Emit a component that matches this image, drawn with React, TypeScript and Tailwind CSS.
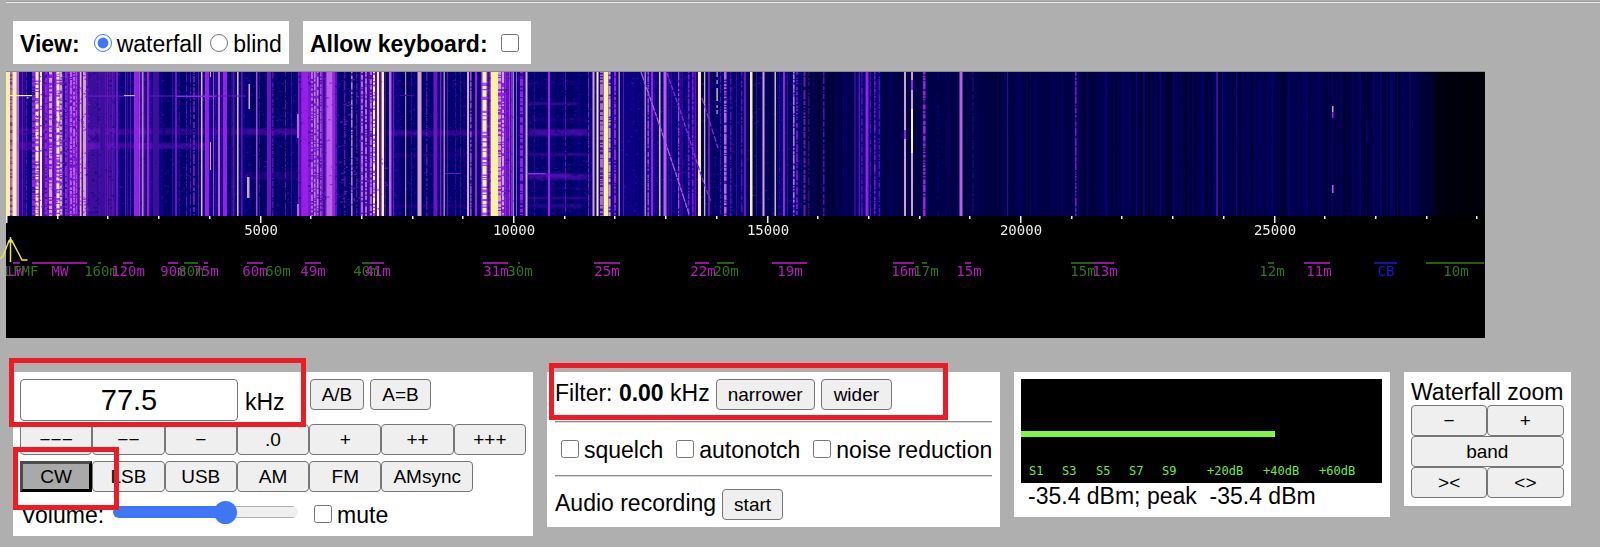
import { useState, type ReactNode } from "react";

const LEVELS = [
  "#00001c", "#000048", "#02006c", "#0c0084", "#3c0e9c",
  "#6a16c0", "#9620e8", "#b860e6", "#d0a4c6", "#f8f49c",
];

// Background power of the spectrum: start, end, level, density of faint streaks
const BACKGROUND: [number, number, number, number][] = [
  [6, 19, 7, 0], [19, 32, 3, 0.7], [32, 88, 5, 0.9], [88, 115, 4, 0.2],
  [115, 135, 3, 0.5], [135, 150, 4, 0.4], [150, 163, 3, 0.4], [163, 200, 2, 0.4],
  [200, 245, 3, 0.6], [245, 298, 2, 0.4], [298, 337, 5, 0.6], [337, 360, 2, 0.5],
  [360, 386, 4, 0.8], [386, 400, 3, 0.5], [400, 481, 2, 0.4], [481, 512, 6, 0.5],
  [512, 528, 3, 0.6], [528, 588, 2, 0.3], [588, 622, 3, 0.6], [622, 668, 3, 0.1],
  [668, 700, 3, 0.5], [700, 760, 2, 0.6], [760, 802, 2, 0.5], [802, 855, 1, 0.4],
  [855, 881, 2, 0.5], [881, 1100, 1, 0.25], [1100, 1415, 1, 0.6], [1415, 1435, 1, 0.2],
  [1435, 1485, 0, 0.1],
];

// Carriers: x, width, level, 1 when the trace is broken up
const CARRIERS: [number, number, number, number][] = [
  [6, 4, 9, 0], [10, 3, 7, 1], [12.5, 4, 9, 0], [22, 1, 5, 0], [26, 1, 5, 1],
  [32, 3, 6, 1], [35.5, 3, 9, 1], [40, 2, 9, 0], [43, 1, 4, 0], [45, 2, 6, 1], [49, 3, 8, 1],
  [53, 1, 4, 0], [56.5, 3, 9, 1], [60, 2, 8, 1], [63, 2, 3, 0], [65, 2, 6, 1], [68, 1, 4, 0],
  [70, 2, 7, 1], [73, 2, 7, 1], [76, 1, 7, 1], [78, 1, 4, 0], [80, 1.5, 9, 0], [83, 3, 8, 0],
  [100, 5, 4, 0], [107, 1, 5, 0], [116, 2, 5, 0], [125, 1, 5, 0], [127, 1, 4, 0], [130, 1, 5, 0],
  [134, 4, 6, 0], [138.5, 1.5, 7, 0], [142, 1.5, 8, 0], [147, 2, 6, 0], [153, 6, 4, 0],
  [172, 1, 4, 0], [175, 2, 5, 0], [179, 1, 4, 1], [186, 1, 5, 1], [190, 1, 5, 1], [193, 2, 5, 1],
  [198, 1, 5, 0], [201, 1.5, 9, 0], [205, 4, 6, 0], [213, 1, 7, 0], [218, 2, 7, 0], [223, 4, 6, 0],
  [229, 2, 1, 0], [233, 1.5, 5, 0], [237, 1.5, 9, 0], [241, 1.5, 5, 0], [256, 1.5, 7, 0],
  [259, 1, 4, 1], [267, 4, 5, 0], [272, 1.5, 5, 1], [285, 1, 5, 1], [291, 1, 4, 0],
  [302, 6, 6, 0], [311, 2, 7, 1], [314, 1.5, 8, 1], [317, 1.5, 8, 1], [320, 1.5, 7, 1],
  [323, 2, 4, 0], [326.5, 6, 7, 0], [333, 2, 6, 0], [344, 1.5, 5, 1], [351, 1.5, 8, 1],
  [356, 1.5, 5, 1], [361, 2, 7, 1], [365, 2, 7, 1], [368, 1, 4, 0], [370, 2, 7, 1],
  [373, 2, 9, 1], [377, 2, 9, 0], [379.5, 1, 5, 0], [381.5, 2.5, 9, 0], [386, 2, 1, 0],
  [389, 2.5, 7, 0], [393, 1, 5, 0], [405, 1.2, 8, 0], [411, 1, 4, 1], [417.5, 4, 8, 0],
  [426, 1.5, 5, 1], [433.5, 4, 5, 0], [440, 1.5, 6, 0], [443.5, 1.5, 8, 0], [447, 1, 5, 0],
  [455, 1, 4, 1], [460, 1, 4, 1], [467, 2, 8, 0], [470, 1.5, 7, 1], [475, 2, 6, 0],
  [479, 2, 3, 0], [482.5, 4, 9, 1], [487.5, 2, 4, 1], [491, 7, 9, 0], [498, 3, 8, 1],
  [502, 2, 8, 1], [506, 3, 5, 1], [510, 1, 3, 0], [512.5, 1.5, 8, 0], [516, 1, 7, 0],
  [520, 3, 6, 1], [525.5, 2, 8, 0], [534, 1, 4, 1], [548, 2, 6, 0], [565, 1, 5, 1],
  [588, 1, 6, 1], [592.5, 2, 8, 0], [596.5, 2, 9, 0], [600, 3, 7, 1], [603.5, 5, 9, 0],
  [608.5, 2, 8, 1], [614, 2, 6, 1], [618.5, 1.5, 8, 0], [623, 1, 5, 0], [640, 1, 2, 0],
  [644.5, 1.5, 8, 0], [647.5, 1.5, 7, 1], [651, 2, 6, 0], [655, 1, 2, 0], [659, 1.5, 9, 0],
  [663.5, 3, 7, 0], [671, 1, 4, 0], [678, 1.2, 7, 1], [688, 1.5, 6, 1], [692, 1.5, 6, 1],
  [695, 1, 5, 0], [698, 3, 9, 0], [704, 1.3, 9, 0], [708, 2, 5, 0], [720, 1, 5, 1],
  [724, 2.5, 7, 1], [730, 1.5, 5, 1], [736, 1, 4, 0], [741, 1.5, 5, 1], [744, 2, 5, 0],
  [750, 2.5, 9, 0], [756, 1, 4, 0], [762.5, 2, 8, 0], [769, 3, 1, 0], [774.5, 1.5, 9, 0],
  [779, 1, 4, 1], [783, 2, 6, 0], [787, 1, 4, 0], [793, 1.5, 8, 1], [796, 2, 5, 1],
  [803.5, 2, 5, 1], [808, 1.5, 4, 1], [813, 1, 2, 0], [823, 1.5, 5, 1], [834, 1, 2, 1],
  [854.5, 1, 5, 0], [858.5, 1.5, 5, 0], [861.5, 1, 6, 1], [865.5, 3, 6, 0], [870, 1, 5, 1],
  [874, 1.5, 6, 1], [878.5, 1.5, 5, 1], [904, 2, 8, 0], [911, 2, 8, 0], [923, 2.5, 6, 1],
  [937, 2, 2, 1], [959.5, 3, 7, 0], [972.5, 1, 4, 1], [1007, 1.2, 4, 0], [1030, 1, 2, 0],
  [1075, 1.5, 6, 1], [1078, 1, 2, 0], [1087, 1, 3, 0], [1106, 1.5, 3, 0], [1124, 1, 2, 0],
  [1136, 1, 3, 0], [1143, 1.5, 3, 0], [1160, 1.5, 3, 0], [1173, 1.5, 3, 0], [1192, 1, 2, 0],
  [1202, 2, 2, 0], [1216, 2, 4, 0], [1222, 1, 3, 0], [1236, 1.5, 3, 0], [1254, 1, 2, 0],
  [1271, 2, 2, 0], [1288, 2, 2, 0], [1306, 2, 2, 0], [1340, 1, 2, 0], [1358, 2, 2, 0],
  [1380, 2, 2, 0], [1390, 3, 2, 0], [1409.5, 1.5, 3, 0],
];

// Short transmissions: x, y, width, height, level
const BURSTS: [number, number, number, number, number][] = [
  [6, 95, 26, 1.2, 9], [27, 97, 1.5, 1.5, 8], [88, 95.5, 36, 1.2, 5], [124, 95, 11, 1.2, 8],
  [150, 95.5, 26, 1, 5], [176, 95.5, 40, 1.5, 6], [216, 95.5, 30, 1, 5], [210, 72, 1, 5, 8],
  [210, 142, 1, 28, 8], [248.5, 84, 1.5, 25, 8], [247, 177, 2.5, 21, 8], [297, 114, 2, 24, 7],
  [297, 204, 2, 12, 7], [445, 173, 16, 1, 5], [528, 173, 18, 1.5, 6],
  [400, 95, 14, 1, 4], [716.5, 72, 1.2, 5, 8], [716.5, 80, 1.2, 4, 8],
  [716.5, 88, 1.2, 13, 9], [716.5, 105, 1.2, 3, 8], [716.5, 110, 1.2, 4, 8], [911, 109, 2, 44, 9],
  [911, 80, 2, 10, 6], [904, 130, 2, 9, 6], [1332, 106, 1.5, 6, 8], [1332, 112, 1.5, 6, 6],
  [1332, 185, 1.5, 8, 7], [1366.5, 120, 1.2, 23, 3],
];

// Diffuse horizontal bands: x, y, width, height, opacity
const HAZE: [number, number, number, number, number][] = [
  [19, 128, 280, 7, 0.25], [19, 142, 75, 8, 0.4], [88, 143, 120, 6, 0.45], [88, 131, 60, 3, 0.25],
  [245, 129, 55, 6, 0.25], [245, 172, 50, 8, 0.18], [387, 130, 95, 6, 0.35], [387, 154, 95, 3, 0.2],
  [528, 129, 60, 7, 0.5], [528, 153, 60, 3, 0.35], [528, 119, 60, 1, 0.5], [528, 174, 60, 6, 0.45],
  [528, 197, 60, 2, 0.45], [528, 204, 55, 4, 0.25], [528, 83, 50, 1, 0.4], [387, 205, 95, 3, 0.2],
  [387, 83, 90, 1, 0.2], [528, 188, 60, 1, 0.3], [528, 103, 50, 1.5, 0.7], [545, 173, 25, 4, 0.4],
];

function makeRandom(seed: number) {
  let s = seed;
  return () => {
    s = (s * 1664525 + 1013904223) % 4294967296;
    return s / 4294967296;
  };
}

function buildStreaks() {
  const rnd = makeRandom(7);
  const out: { x: number; level: number; opacity: number }[] = [];
  for (const [a, b, level, density] of BACKGROUND) {
    for (let x = a; x < b - 1; x += 1.5) {
      if (rnd() > density) continue;
      const shift = rnd() > 0.4 ? 1 : -1;
      out.push({ x, level: Math.max(0, Math.min(9, level + shift)), opacity: 0.25 + rnd() * 0.6 });
    }
  }
  return out;
}

function buildGrain(seed: number, count: number, from: number, to: number) {
  const rnd = makeRandom(seed);
  let d = "";
  for (let i = 0; i < count; i++) {
    const x = (from + rnd() * (to - from)).toFixed(1);
    const y = (73 + rnd() * 142).toFixed(1);
    d += `M${x} ${y}h${(1 + rnd() * 2).toFixed(1)}`;
  }
  return d;
}

function buildDashes(seed: number) {
  const rnd = makeRandom(seed * 7919 + 5);
  rnd();
  const parts: string[] = [];
  for (let i = 0; i < 40; i++) {
    parts.push((0.8 + rnd() * rnd() * 12).toFixed(1), (0.8 + rnd() * rnd() * 3.5).toFixed(1));
  }
  return parts.join(" ");
}

const STREAKS = buildStreaks();
const DARK_GRAIN = buildGrain(11, 2600, 20, 800);
const BRIGHT_GRAIN = buildGrain(23, 1400, 30, 800);
const LIGHT_GRAIN = buildGrain(41, 340, 32, 88) + buildGrain(43, 140, 300, 386) + buildGrain(47, 60, 498, 512);
const FAINT_GRAIN = buildGrain(59, 700, 800, 1430);

const MAGENTA = "#b01eb8";
const GREEN = "#317417";

const BANDS: { name: string; at: number; from?: number; to?: number; color: string }[] = [
  { name: "LF", at: 13, color: GREEN },
  { name: "LW", at: 16, from: 13, to: 20, color: MAGENTA },
  { name: "MF", at: 30, color: GREEN },
  { name: "MW", at: 60, from: 32, to: 87, color: MAGENTA },
  { name: "160m", at: 101, from: 98, to: 101, color: GREEN },
  { name: "120m", at: 128, from: 123, to: 133, color: MAGENTA },
  { name: "90m", at: 173, from: 168, to: 178, color: MAGENTA },
  { name: "80m", at: 191, from: 184, to: 198, color: GREEN },
  { name: "75m", at: 206, from: 204, to: 208, color: MAGENTA },
  { name: "60m", at: 255, from: 247, to: 263, color: MAGENTA },
  { name: "60m", at: 278, color: GREEN },
  { name: "49m", at: 313, from: 305, to: 321, color: MAGENTA },
  { name: "40m", at: 366, from: 362, to: 372, color: GREEN },
  { name: "41m", at: 378, from: 371, to: 384, color: MAGENTA },
  { name: "31m", at: 496, from: 483, to: 508, color: MAGENTA },
  { name: "30m", at: 520, from: 518, to: 520, color: GREEN },
  { name: "25m", at: 607, from: 594, to: 620, color: MAGENTA },
  { name: "22m", at: 703, from: 695, to: 709, color: MAGENTA },
  { name: "20m", at: 726, from: 717, to: 734, color: GREEN },
  { name: "19m", at: 790, from: 772, to: 807, color: MAGENTA },
  { name: "16m", at: 904, from: 893, to: 914, color: MAGENTA },
  { name: "17m", at: 926, from: 922, to: 927, color: GREEN },
  { name: "15m", at: 969, from: 965, to: 971, color: MAGENTA },
  { name: "15m", at: 1083, from: 1071, to: 1093, color: GREEN },
  { name: "13m", at: 1105, from: 1093, to: 1114, color: MAGENTA },
  { name: "12m", at: 1272, from: 1268, to: 1274, color: GREEN },
  { name: "11m", at: 1319, from: 1304, to: 1330, color: MAGENTA },
  { name: "CB", at: 1386, from: 1374, to: 1397, color: "#1c14dc" },
  { name: "10m", at: 1456, from: 1426, to: 1484, color: GREEN },
];

const MONO = "font-['DejaVu_Sans_Mono',monospace]";

function Waterfall() {
  return (
    <svg
      viewBox="6 72 1479 266"
      className="block h-auto w-full max-w-[1479px] overflow-visible"
      role="img"
      aria-label="Waterfall, 0 to 29160 kHz"
    >
      <defs>
        <linearGradient id="edge" x1="0" x2="1">
          <stop offset="0" stopColor="#000008" stopOpacity="0" />
          <stop offset="0.5" stopColor="#000008" stopOpacity="0.75" />
          <stop offset="1" stopColor="#000008" />
        </linearGradient>
        <filter id="diffuse">
          <feGaussianBlur stdDeviation="3 1.3" />
        </filter>
        <clipPath id="plot">
          <rect x="6" y="72" width="1479" height="144" />
        </clipPath>
      </defs>
      <rect x="6" y="72" width="1479" height="266" fill="#000" />
      <g clipPath="url(#plot)">
        {BACKGROUND.map(([a, b, level]) => (
          <rect key={a} x={a} y="72" width={b - a} height="144" fill={LEVELS[level]} />
        ))}
        {STREAKS.map((s, i) => (
          <rect key={i} x={s.x} y="72" width="1.5" height="144" fill={LEVELS[s.level]} opacity={s.opacity} />
        ))}
        <g filter="url(#diffuse)">
          {HAZE.map(([x, y, w, h, o], i) => (
            <rect key={i} x={x} y={y} width={w} height={h} fill="#7a1ad0" opacity={o} />
          ))}
        </g>
        <path d={DARK_GRAIN} stroke="#04005c" strokeWidth="1.4" opacity="0.45" />
        <path d={BRIGHT_GRAIN} stroke="#6a18c0" strokeWidth="1.2" opacity="0.35" />
        <path d={FAINT_GRAIN} stroke="#000024" strokeWidth="1.4" opacity="0.25" />
        {CARRIERS.map(([x, w, level, broken]) => (
          <g key={x} fill="none" strokeWidth={w} opacity={w < 1.6 ? 0.8 : 1}>
            {broken === 1 && (
              <path
                d={`M${x + w / 2} 72V216`}
                stroke={LEVELS[Math.max(0, level - 2)]}
                opacity={level > 5 ? 0.75 : 0.4}
              />
            )}
            <path
              d={`M${x + w / 2} 72V216`}
              stroke={LEVELS[level]}
              strokeDasharray={broken ? buildDashes(Math.round(x * 2)) : undefined}
            />
          </g>
        ))}
        <path d={LIGHT_GRAIN} stroke="#7a1ad0" strokeWidth="1.4" opacity="0.7" />
        {BURSTS.map(([x, y, w, h, level], i) => (
          <rect key={i} x={x} y={y} width={w} height={h} fill={LEVELS[level]} />
        ))}
        <g fill="none" strokeWidth="1.3">
          <path d="M641 72L655 112L667 147L678 180L689 214" stroke="#b45ae0" strokeDasharray="9 1 5 1" />
          <path d="M667 73L680 110L690 141L702 178L711 202" stroke="#8a2ae0" strokeDasharray="5 1.5" />
          <path d="M702 98L718 148" stroke="#8a2ae0" strokeDasharray="6 2" />
        </g>
        <rect x="1412" y="72" width="73" height="144" fill="url(#edge)" />
      </g>
      <rect x="6" y="71" width="1479" height="1" fill="#8c8c8c" />
      {Array.from({ length: 30 }, (_, k) => (
        <rect key={k} x={6 + Math.round(k * 50.7)} y="216" width="1.5" height={k % 5 ? 3 : 7} fill="#f0f0f0" />
      ))}
      <g fontSize="14" textAnchor="middle" className={MONO}>
        {[5000, 10000, 15000, 20000, 25000].map((f) => (
          <text key={f} x={7 + Math.round(f * 0.0507)} y="235" fill="#ececec">
            {f}
          </text>
        ))}
        {BANDS.map((b, i) => (
          <g key={i} fill={b.color}>
            {b.from !== undefined && b.to !== undefined && (
              <rect x={b.from} y="262" width={b.to - b.from} height="2" opacity="0.8" />
            )}
            <text x={b.at} y="276">
              {b.name}
            </text>
          </g>
        ))}
      </g>
      <g fill="none" stroke="#e6e64a" strokeWidth="1.5">
        <path d="M10.5 237V262" />
        <path d="M0 259L3 256L8.500 242L10.500 239L12.500 242L20 256L22 260H27.500" />
        <path d="M8 241.500H13" strokeWidth="2" />
      </g>
    </svg>
  );
}

function Button({ children, className = "px-[11px]" }: { children: ReactNode; className?: string }) {
  return (
    <button
      type="button"
      className={`h-[31px] rounded-[4px] border border-[#767676] bg-[#efefef] text-[19px] leading-[21px] ${className}`}
    >
      {children}
    </button>
  );
}

function Check({ label }: { label: string }) {
  return (
    <label className="flex items-start gap-[5px]">
      <input type="checkbox" className="mt-[3px] size-[18px]" />
      {label}
    </label>
  );
}

function Highlight({ className }: { className: string }) {
  return <div aria-hidden="true" className={`pointer-events-none absolute border-[5px] border-[#ed1c24] ${className}`} />;
}

function Rule() {
  return <hr className="h-[2px] border-0 border-t border-[#8f8f8f] bg-[#d8d8d8]" />;
}

const METER_MARKS: [string, number][] = [
  ["S1", 8], ["S3", 41], ["S5", 75], ["S7", 108], ["S9", 141],
  ["+20dB", 186], ["+40dB", 242], ["+60dB", 298],
];

export default function App() {
  const [volume, setVolume] = useState(62);
  const [frequency, setFrequency] = useState("77.5");

  return (
    <main className="min-h-screen bg-[#afafaf] pb-[11px] pl-[6px] font-['Liberation_Sans',Arial,sans-serif] text-[23px] leading-[26px] text-black">
      <div className="pt-px">
        <hr className="h-[2px] border-0 border-t border-[#9a9a9a] bg-[#ececec]" />
      </div>

      <div className="mt-[18px] mb-[8px] flex flex-wrap gap-[14px] pl-[7px]">
        <fieldset className="flex items-start bg-white px-[7px] pt-[10px] pb-[7px]">
          <b>View:</b>
          <label className="ml-[14px] flex items-start gap-[5px]">
            <input type="radio" name="view" defaultChecked className="mt-[3px] size-[18px] accent-[#3f76f5]" />
            waterfall
          </label>
          <label className="ml-[8px] flex items-start gap-[5px]">
            <input type="radio" name="view" className="mt-[3px] size-[18px]" />
            blind
          </label>
        </fieldset>
        <label className="flex items-start gap-[13px] bg-white pt-[10px] pr-[12px] pb-[7px] pl-[7px]">
          <b>Allow keyboard:</b>
          <input type="checkbox" className="mt-[3px] size-[18px]" />
        </label>
      </div>

      <Waterfall />

      <div className="mt-[34px] flex flex-wrap items-start gap-[14px] pl-[7px]">
        <section className="relative w-[520px] bg-white px-[7px] pt-[7px] pb-[8px]">
          <div className="flex items-start">
            <label className="flex items-start gap-[7px]">
              <input
                type="text"
                value={frequency}
                onChange={(e) => setFrequency(e.target.value)}
                className="h-[42px] w-[218px] rounded-[4px] border border-[#767676] bg-white text-center text-[29px]"
              />
              <span className="pt-[10px]">kHz</span>
            </label>
            <div className="ml-[25px] flex gap-[6px]">
              <Button>A/B</Button>
              <Button>A=B</Button>
            </div>
          </div>
          <div className="mt-[3px] grid grid-cols-7">
            {["−−−", "−−", "−", ".0", "+", "++", "+++"].map((t) => (
              <Button key={t} className="px-0">{t}</Button>
            ))}
          </div>
          <div className="mt-[6px] flex">
            <button
              type="button"
              aria-pressed="true"
              className="h-[31px] w-1/7 border-[3px] border-t-[#4c4c4c] border-r-black border-b-black border-l-[#4c4c4c] bg-[#a9a9a9] text-[19px] leading-[21px]"
            >
              CW
            </button>
            {["LSB", "USB", "AM", "FM"].map((t) => (
              <Button key={t} className="w-1/7">{t}</Button>
            ))}
            <Button>AMsync</Button>
          </div>
          <div className="mt-[10px] flex items-start pl-px">
            <label htmlFor="volume">Volume:</label>
            <input
              id="volume"
              type="range"
              value={volume}
              onChange={(e) => setVolume(Number(e.target.value))}
              style={{
                backgroundImage: `linear-gradient(to right, #3f76f5 ${volume}%, transparent ${volume}%), linear-gradient(#b2b2b2 1px, #efefef 1px, #efefef 11px, #b2b2b2 11px)`,
              }}
              className="mt-[4px] mr-[16px] ml-[9px] h-[12px] w-[185px] appearance-none rounded-full [&::-webkit-slider-thumb]:size-[23px] [&::-webkit-slider-thumb]:appearance-none [&::-webkit-slider-thumb]:rounded-full [&::-webkit-slider-thumb]:bg-[#3f76f5]"
            />
            <Check label="mute" />
          </div>
          <Highlight className="-top-[14px] -left-[4px] h-[69px] w-[297px]" />
          <Highlight className="top-[75px] left-0 h-[63px] w-[106px]" />
        </section>

        <section className="relative w-[453px] bg-white px-[8px] py-[7px]">
          <div className="flex items-baseline gap-[6px]">
            <span>
              Filter: <b>0.00</b> kHz
            </span>
            <Button>narrower</Button>
            <Button className="px-[12px]">wider</Button>
          </div>
          <div className="mt-[11px] mb-[14px]">
            <Rule />
          </div>
          <div className="flex gap-[13px] pl-[6px] whitespace-nowrap">
            <Check label="squelch" />
            <Check label="autonotch" />
            <Check label="noise reduction" />
          </div>
          <div className="my-[12px]">
            <Rule />
          </div>
          <div className="flex items-baseline gap-[6px]">
            <span>Audio recording</span>
            <Button>start</Button>
          </div>
          <Highlight className="-top-[9px] left-[2px] h-[57px] w-[399px]" />
        </section>

        <section className="w-[376px] bg-white px-[7px] pt-[7px] pb-[8px]">
          <svg viewBox="0 0 361 104" className="block h-auto w-[361px] max-w-full" role="img" aria-label="Signal strength">
            <rect width="361" height="104" fill="#000" />
            <rect y="52" width="254" height="6" fill="#80f545" />
            <g fill="#72e83f" fontSize="12" className={MONO}>
              {METER_MARKS.map(([t, x]) => (
                <text key={t} x={x} y="96">
                  {t}
                </text>
              ))}
            </g>
          </svg>
          <p className="pl-[7px]">-35.4 dBm; peak&nbsp; -35.4 dBm</p>
        </section>

        <section className="bg-white px-[7px] pt-[7px] pb-[8px]">
          <h2>Waterfall zoom</h2>
          <div className="grid grid-cols-2">
            <Button className="px-0">−</Button>
            <Button className="px-0">+</Button>
            <Button className="col-span-2">band</Button>
            <Button className="px-0">&gt;&lt;</Button>
            <Button className="px-0">&lt;&gt;</Button>
          </div>
        </section>
      </div>
    </main>
  );
}
